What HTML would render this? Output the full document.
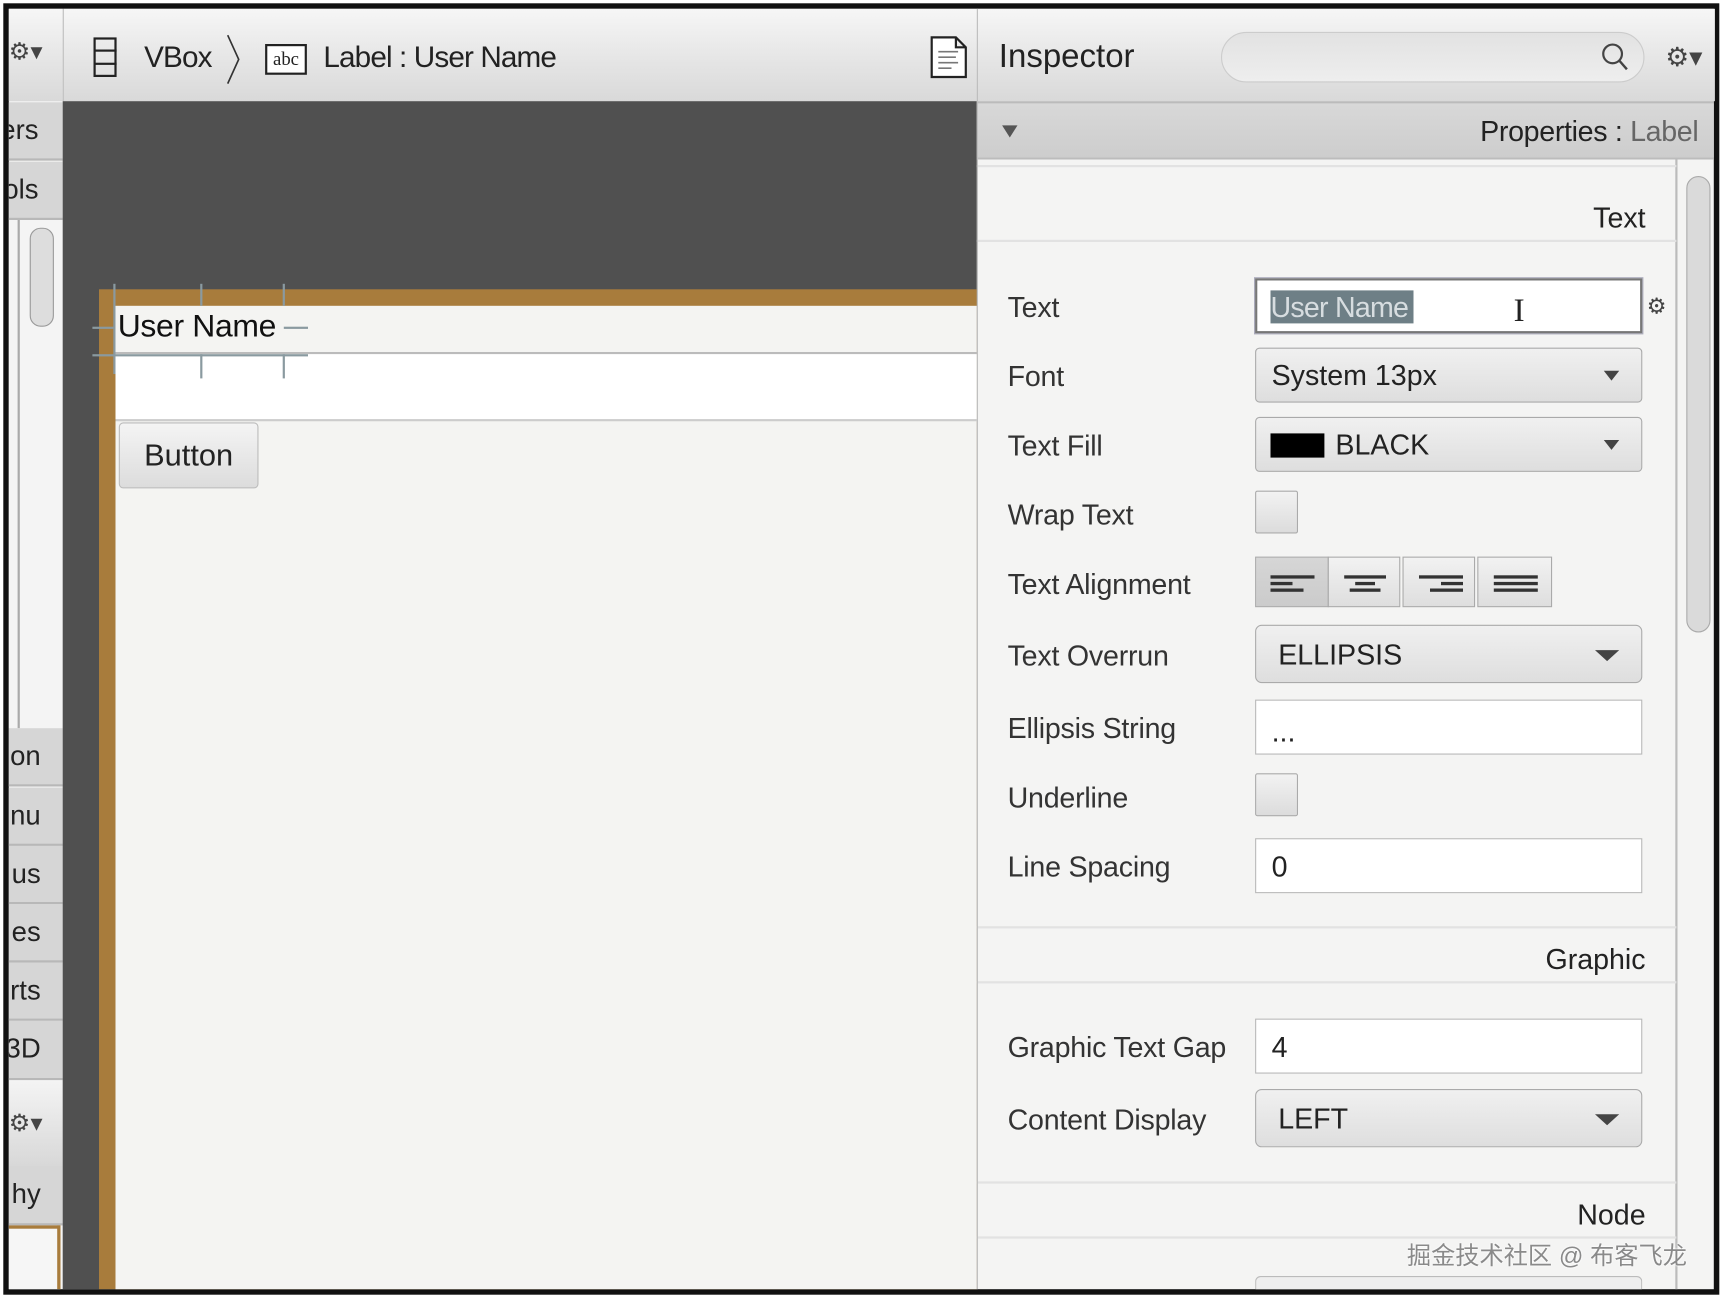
<!DOCTYPE html>
<html><head><meta charset="utf-8"><style>
html,body{margin:0;padding:0;background:#fff;overflow:hidden}
body{width:1725px;height:1299px;position:relative}
#s{position:absolute;left:0;top:0;width:1568px;height:1181px;transform:scale(1.1);transform-origin:0 0;font-family:"Liberation Sans","Noto Sans CJK SC",sans-serif;color:#222}
.a{position:absolute}
.hdr{background:linear-gradient(#f6f6f6,#e4e4e4 60%,#d9d9d9)}
.tab{position:absolute;left:8px;width:49px;background:#d6d6d6;border-bottom:2px solid #b8b8b8;font-size:25px;overflow:hidden;white-space:nowrap;box-sizing:border-box}
.tab span{position:absolute;right:20px;top:50%;transform:translateY(-50%)}
.lbl{position:absolute;left:916px;font-size:26px;color:#333;letter-spacing:-0.2px}
.fld{position:absolute;left:1141px;width:352px;box-sizing:border-box;border:1px solid #b8b8b8;font-size:26px}
.txt{background:#fff}
.cmb{background:linear-gradient(#f0f0f0,#dedede);border-radius:4px;border-color:#aaa}
.chk{position:absolute;left:1141px;width:39px;height:39px;box-sizing:border-box;border:1px solid #aaa;background:linear-gradient(#f2f2f2,#dcdcdc);border-radius:2px}
.arr{position:absolute;right:20px;top:50%;margin-top:-4px;width:0;height:0;border-left:8px solid transparent;border-right:8px solid transparent;border-top:9px solid #444}
.sec{position:absolute;left:888px;width:636px;border-bottom:2px solid #e2e2e2;font-size:26px;text-align:right;box-sizing:border-box;padding-right:28px}
.ab{position:absolute;top:506px;width:66px;height:46px;box-sizing:border-box;border:1px solid #aaa;background:linear-gradient(#f2f2f2,#dedede)}
.ab i{position:absolute;height:3px;background:#333}
</style></head><body><div id="s">
<div class="a" style="left:3px;top:3px;width:1560px;height:1174px;background:#111"></div>
<div class="a" style="left:8px;top:8px;width:1550px;height:1164px;background:#f4f4f3"></div>

<div class="a hdr" style="left:8px;top:8px;width:49px;height:84px"></div>
<div class="a" style="left:8px;top:34px;font-size:22px;color:#444">⚙▾</div>
<div class="tab" style="top:93px;height:53px"><span style="right:22px">ers</span></div>
<div class="tab" style="top:147px;height:53px"><span style="right:22px">ols</span></div>
<div class="a" style="left:8px;top:200px;width:49px;height:462px;background:#f4f4f4"></div>
<div class="a" style="left:16px;top:200px;width:2px;height:462px;background:#aaa"></div>
<div class="a" style="left:27px;top:207px;width:20px;height:88px;border:1px solid #999;border-radius:10px;background:#ddd"></div>
<div class="tab" style="top:662px;height:53px"><span>on</span></div>
<div class="tab" style="top:716px;height:53px"><span>nu</span></div>
<div class="tab" style="top:769px;height:53px"><span>us</span></div>
<div class="tab" style="top:822px;height:53px"><span>es</span></div>
<div class="tab" style="top:875px;height:53px"><span>rts</span></div>
<div class="tab" style="top:928px;height:54px"><span>3D</span></div>
<div class="a" style="left:8px;top:982px;width:49px;height:78px;background:linear-gradient(#f4f4f4,#d8d8d8)"></div>
<div class="a" style="left:8px;top:1008px;font-size:22px;color:#444">⚙▾</div>
<div class="tab" style="top:1060px;height:54px"><span>hy</span></div>
<div class="a" style="left:8px;top:1114px;width:47px;height:58px;background:#f6f6f6;border-top:3px solid #a87c3c;border-right:3px solid #a87c3c;box-sizing:border-box"></div>

<div class="a hdr" style="left:57px;top:8px;width:831px;height:84px;border-left:1px solid #bbb"></div>
<div class="a" style="left:85px;top:34px;width:21px;height:36px;border:2px solid #222;box-sizing:border-box"></div>
<div class="a" style="left:85px;top:45px;width:21px;height:2px;background:#222"></div>
<div class="a" style="left:85px;top:57px;width:21px;height:2px;background:#222"></div>
<div class="a" style="left:131px;top:37px;font-size:27px;letter-spacing:-0.8px">VBox</div>
<svg class="a" style="left:204px;top:30px" width="16" height="48"><path d="M3 2 L13 24 L3 46" fill="none" stroke="#333" stroke-width="1.5"/></svg>
<div class="a" style="left:241px;top:40px;width:38px;height:28px;border:2px solid #222;box-sizing:border-box;background:#fff;font-family:'Liberation Serif',serif;font-size:17px;text-align:center;line-height:23px">abc</div>
<div class="a" style="left:294px;top:37px;font-size:27px;letter-spacing:-0.8px">Label : User Name</div>
<svg class="a" style="left:845px;top:32px" width="36" height="40"><path d="M2 2 H24 L33 11 V38 H2 Z M24 2 V11 H33" fill="#fff" stroke="#222" stroke-width="2"/><path d="M8 15h18M8 20h16M8 25h18M8 30h12" stroke="#777" stroke-width="1.5"/></svg>

<div class="a" style="left:57px;top:92px;width:831px;height:1080px;background:#505050"></div>
<div class="a" style="left:90px;top:263px;width:798px;height:909px;background:#a87c3c"></div>
<div class="a" style="left:105px;top:278px;width:783px;height:894px;background:#f4f4f2"></div>
<div class="a" style="left:105px;top:320px;width:783px;height:2px;background:#bbb"></div>
<div class="a" style="left:105px;top:322px;width:783px;height:59px;background:#fff;border-bottom:2px solid #ccc"></div>
<div class="a" style="left:107px;top:281px;font-size:29px;color:#111;letter-spacing:-0.3px">User Name</div>
<div class="a" style="left:84px;top:297px;width:20px;height:2px;background:#8a9aa0"></div>
<div class="a" style="left:258px;top:297px;width:22px;height:2px;background:#8a9aa0"></div>
<div class="a" style="left:84px;top:322px;width:196px;height:2px;background:#8a9aa0"></div>
<div class="a" style="left:103px;top:258px;width:2px;height:82px;background:#8a9aa0"></div>
<div class="a" style="left:182px;top:258px;width:2px;height:20px;background:#8a9aa0"></div>
<div class="a" style="left:257px;top:258px;width:2px;height:20px;background:#8a9aa0"></div>
<div class="a" style="left:182px;top:322px;width:2px;height:22px;background:#8a9aa0"></div>
<div class="a" style="left:257px;top:322px;width:2px;height:22px;background:#8a9aa0"></div>
<div class="a" style="left:108px;top:384px;width:127px;height:60px;box-sizing:border-box;border:1px solid #bbb;border-radius:4px;background:linear-gradient(#f4f4f4,#dcdcdc);font-size:28px;text-align:center;line-height:58px;color:#222">Button</div>

<div class="a hdr" style="left:888px;top:8px;width:670px;height:84px;border-left:1px solid #bbb"></div>
<div class="a" style="left:908px;top:35px;font-size:30px;color:#222">Inspector</div>
<div class="a" style="left:1110px;top:29px;width:385px;height:46px;border:1px solid #ccc;border-radius:23px;box-sizing:border-box;background:linear-gradient(#e2e2e2,#eeeeee)"></div>
<svg class="a" style="left:1454px;top:38px" width="28" height="28"><circle cx="12" cy="11" r="8.5" fill="none" stroke="#444" stroke-width="2"/><path d="M18 17 L25 25" stroke="#444" stroke-width="2.2"/></svg>
<div class="a" style="left:1514px;top:38px;font-size:24px;color:#444">⚙▾</div>
<div class="a" style="left:888px;top:92px;width:670px;height:53px;background:linear-gradient(#d8d8d8,#cdcdcd);border-top:2px solid #bbb;border-bottom:2px solid #bcbcbc;box-sizing:border-box"></div>
<div class="a" style="left:911px;top:114px;width:0;height:0;border-left:7px solid transparent;border-right:7px solid transparent;border-top:11px solid #555"></div>
<div class="a" style="right:24px;top:104px;font-size:26px;letter-spacing:-0.3px;color:#222">Properties : <span style="color:#666">Label</span></div>

<div class="a" style="left:1523px;top:145px;width:2px;height:1027px;background:#bbb"></div>
<div class="a" style="left:1533px;top:160px;width:22px;height:415px;border:1px solid #aaa;border-radius:11px;background:#dadada;box-sizing:border-box"></div>

<div class="sec" style="top:150px;height:70px;line-height:92px;border-top:2px solid #e2e2e2">Text</div>
<div class="lbl" style="top:264px">Text</div>
<div class="fld txt" style="top:253px;height:50px;border:2px solid #777;box-shadow:0 0 0 1px #aab"></div>
<div class="a" style="left:1155px;top:264px;height:30px;width:130px;background:#6e7f86;color:#d7dde0;font-size:26px;line-height:30px;letter-spacing:-0.7px;overflow:hidden;white-space:nowrap">User Name</div>
<div class="a" style="left:1376px;top:266px;font-size:30px;font-family:'Liberation Serif',serif">I</div>
<div class="a" style="left:1497px;top:266px;font-size:20px;color:#444">⚙</div>

<div class="lbl" style="top:327px">Font</div>
<div class="fld cmb" style="top:316px;height:50px;padding-left:14px;line-height:48px">System 13px<div class="arr" style="border-left-width:7px;border-right-width:7px"></div></div>

<div class="lbl" style="top:390px">Text Fill</div>
<div class="fld cmb" style="top:379px;height:50px;padding-left:72px;line-height:48px">BLACK<div class="arr" style="border-left-width:7px;border-right-width:7px"></div><div class="a" style="left:13px;top:14px;width:49px;height:22px;background:#000"></div></div>

<div class="lbl" style="top:453px">Wrap Text</div>
<div class="chk" style="top:446px"></div>

<div class="lbl" style="top:516px">Text Alignment</div>
<div class="ab" style="left:1141px;width:67px;background:linear-gradient(#d6d6d6,#cbcbcb)"><i style="left:13px;top:16px;width:40px"></i><i style="left:13px;top:22px;width:20px"></i><i style="left:13px;top:28px;width:30px"></i></div>
<div class="ab" style="left:1207px"><i style="left:14px;top:16px;width:38px"></i><i style="left:24px;top:22px;width:18px"></i><i style="left:19px;top:28px;width:28px"></i></div>
<div class="ab" style="left:1275px"><i style="left:14px;top:16px;width:40px"></i><i style="left:34px;top:22px;width:20px"></i><i style="left:24px;top:28px;width:30px"></i></div>
<div class="ab" style="left:1343px;width:68px"><i style="left:14px;top:16px;width:40px"></i><i style="left:14px;top:22px;width:40px"></i><i style="left:14px;top:28px;width:40px"></i></div>

<div class="lbl" style="top:581px">Text Overrun</div>
<div class="fld cmb" style="top:568px;height:53px;padding-left:20px;line-height:52px;border-radius:6px">ELLIPSIS<div class="arr" style="border-left-width:11px;border-right-width:11px;border-top-width:10px"></div></div>

<div class="lbl" style="top:647px">Ellipsis String</div>
<div class="fld txt" style="top:636px;height:50px;padding-left:14px;line-height:56px">...</div>

<div class="lbl" style="top:710px">Underline</div>
<div class="chk" style="top:703px"></div>

<div class="lbl" style="top:773px">Line Spacing</div>
<div class="fld txt" style="top:762px;height:50px;padding-left:14px;line-height:50px">0</div>

<div class="sec" style="top:842px;height:52px;line-height:56px;border-top:2px solid #e2e2e2">Graphic</div>
<div class="lbl" style="top:937px">Graphic Text Gap</div>
<div class="fld txt" style="top:926px;height:50px;padding-left:14px;line-height:50px">4</div>
<div class="lbl" style="top:1003px">Content Display</div>
<div class="fld cmb" style="top:990px;height:53px;padding-left:20px;line-height:52px;border-radius:6px">LEFT<div class="arr" style="border-left-width:11px;border-right-width:11px;border-top-width:10px"></div></div>

<div class="sec" style="top:1074px;height:52px;line-height:56px;border-top:2px solid #e2e2e2">Node</div>
<div class="a" style="left:1141px;top:1160px;width:352px;height:12px;border:1px solid #bbb;border-bottom:none;border-radius:5px 5px 0 0;background:#eee;box-sizing:border-box"></div>
<div class="a" style="left:888px;top:92px;width:1px;height:1080px;background:#bbb"></div>

<div class="a" style="left:1279px;top:1124px;font-size:22px;color:#8a8a8a;text-shadow:0 0 2px #fff,0 0 2px #fff">掘金技术社区 @ 布客飞龙</div>
</div></body></html>
